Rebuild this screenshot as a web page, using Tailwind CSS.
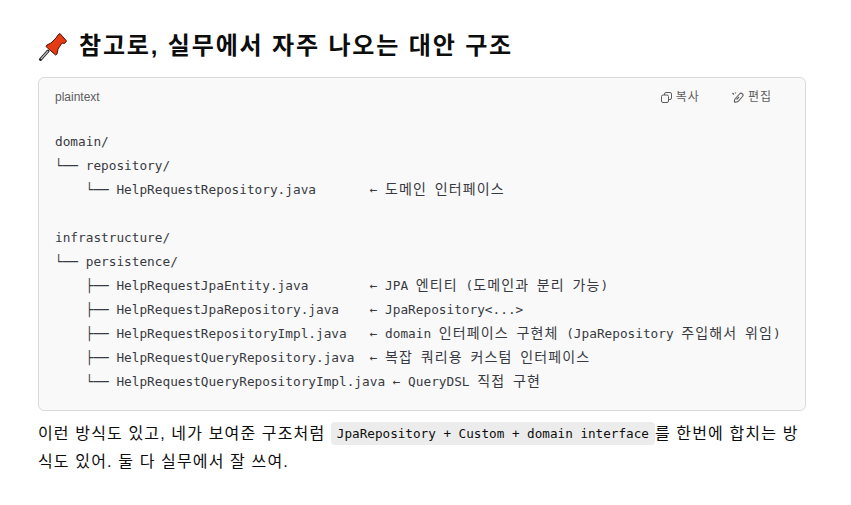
<!DOCTYPE html>
<html lang="ko">
<head>
<meta charset="utf-8">
<script src="https://cdn.jsdelivr.net/npm/@tailwindcss/browser@4"></script>
</head>
<body class="bg-white text-[#0d0d0d] font-['Liberation_Sans','Noto_Sans_CJK_KR',sans-serif]">
<main class="w-[851px] h-[505px] overflow-hidden pl-[38px] pr-[45px] pt-[28px] flex flex-col">
  <h3 class="h-[36px] flex items-center gap-[12px] text-[24px] font-semibold leading-[36px] tracking-[1.85px]">
    <svg class="w-[29px] h-[29px] shrink-0" viewBox="0 0 29 29">
      <path d="M10 19 L2.5 27.5" stroke="#222" stroke-width="3" stroke-linecap="round"/>
      <path d="M10 19 L3 27" stroke="#bbb" stroke-width="1.2"/>
      <path d="M20 3 L22 1.5 L28.5 9 L26.5 11.5 L24 11 L20 17 L19 22 L17.5 23 L8 14.5 L9 13 L13 11 L18 6 Z" fill="#e63b12" stroke="#4a1308" stroke-width="1" stroke-linejoin="round"/>
    </svg>
    <span>참고로, 실무에서 자주 나오는 대안 구조</span>
  </h3>
  <section class="mt-[13px] h-[334px] rounded-[6px] border border-[#d9d9d9] bg-[#f9f9f9] flex flex-col">
    <div class="h-[38px] pl-[16px] pr-[33px] flex items-center justify-between text-[12px] text-[#5d5d5d]">
      <span>plaintext</span>
      <div class="flex items-center gap-[32px]">
        <span class="flex items-center gap-[4px]">
          <svg class="w-[11px] h-[11px]" viewBox="0 0 11 11" fill="none" stroke="#5d5d5d" stroke-width="1"><rect x="0.5" y="3" width="7" height="7.5" rx="1.5"/><path d="M3.5 3V2A1.5 1.5 0 0 1 5 0.5H9A1.5 1.5 0 0 1 10.5 2V6A1.5 1.5 0 0 1 9 7.5H7.5"/></svg>
          <span class="tracking-[1px]">복사</span>
        </span>
        <span class="flex items-center gap-[4px]">
          <svg class="w-[12px] h-[11px]" viewBox="0 0 12 11" fill="none" stroke="#5d5d5d" stroke-width="1.1"><path d="M3 7 L7.5 2 A1.8 1.8 0 0 1 10.5 4.5 L6 9.5 Q4 10.5 2.5 10 Q2.2 8.5 3 7 Z"/><path d="M4.5 7.5 L7 5" /><path d="M0.5 1 L2 2.5 M3.5 0.5 L3.5 1.5" stroke-width="1.2"/></svg>
          <span class="tracking-[1px]">편집</span>
        </span>
      </div>
    </div>
    <pre class="mt-[14px] pl-[16px] text-[12.75px] leading-[24px] text-[#383a42] font-['DejaVu_Sans_Mono','Noto_Sans_CJK_KR',monospace]">domain/
└── repository/
    └── HelpRequestRepository.java       ← <span class="text-[14px] leading-none tracking-[1.12px]">도메인</span> <span class="text-[14px] leading-none tracking-[1.12px]">인터페이스</span>

infrastructure/
└── persistence/
    ├── HelpRequestJpaEntity.java        ← JPA <span class="text-[14px] leading-none tracking-[1.12px]">엔티티</span> (<span class="text-[14px] leading-none tracking-[1.12px]">도메인과</span> <span class="text-[14px] leading-none tracking-[1.12px]">분리</span> <span class="text-[14px] leading-none tracking-[1.12px]">가능</span>)
    ├── HelpRequestJpaRepository.java    ← JpaRepository&lt;...&gt;
    ├── HelpRequestRepositoryImpl.java   ← domain <span class="text-[14px] leading-none tracking-[1.12px]">인터페이스</span> <span class="text-[14px] leading-none tracking-[1.12px]">구현체</span> (JpaRepository <span class="text-[14px] leading-none tracking-[1.12px]">주입해서</span> <span class="text-[14px] leading-none tracking-[1.12px]">위임</span>)
    ├── HelpRequestQueryRepository.java  ← <span class="text-[14px] leading-none tracking-[1.12px]">복잡</span> <span class="text-[14px] leading-none tracking-[1.12px]">쿼리용</span> <span class="text-[14px] leading-none tracking-[1.12px]">커스텀</span> <span class="text-[14px] leading-none tracking-[1.12px]">인터페이스</span>
    └── HelpRequestQueryRepositoryImpl.java ← QueryDSL <span class="text-[14px] leading-none tracking-[1.12px]">직접</span> <span class="text-[14px] leading-none tracking-[1.12px]">구현</span></pre>
  </section>
  <p class="mt-[9px] text-[16px] leading-[28px] tracking-[1.14px] break-all">이런 방식도 있고, 네가 보여준 구조처럼 <code class="rounded-[4px] bg-[#ececec] px-[6px] py-[4px] align-[1px] text-[12.65px] leading-none tracking-normal font-['DejaVu_Sans_Mono','Noto_Sans_CJK_KR',monospace]">JpaRepository + Custom + domain interface</code>를 한번에 합치는 방식도 있어. 둘 다 실무에서 잘 쓰여.</p>
</main>
</body>
</html>
